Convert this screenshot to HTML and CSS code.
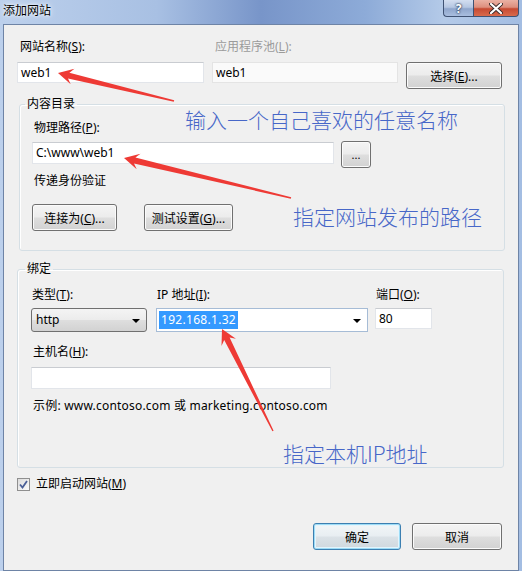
FILE: index.html
```html
<!DOCTYPE html>
<html lang="zh-CN">
<head>
    <meta charset="UTF-8">
    <title>添加网站</title>
    <link rel="stylesheet" href="styles.css">
</head>
<body>
    <div class="window">
        <div class="titlebar">
            <span class="title">添加网站</span>
            <div class="caption-buttons">
                <div class="cap help">?</div>
                <div class="cap close">
                    <svg width="14" height="11" viewBox="0 0 14 11">
                        <path d="M2 1 L12 10 M12 1 L2 10" stroke="#3a2a2a" stroke-width="4" stroke-linecap="round"/>
                        <path d="M2 1 L12 10 M12 1 L2 10" stroke="#fff" stroke-width="2.2" stroke-linecap="round"/>
                    </svg>
                </div>
            </div>
        </div>

        <div class="client">
            <!-- 网站名称 / 应用程序池 -->
            <div class="site-row">
                <div class="col name-col">
                    <div class="label">网站名称(<u>S</u>):</div>
                    <div class="textbox">web1</div>
                </div>
                <div class="col pool-col">
                    <div class="label disabled">应用程序池(<u>L</u>):</div>
                    <div class="textbox readonly">web1</div>
                </div>
                <button class="btn select-btn">选择(<u>E</u>)...</button>
            </div>

            <fieldset class="group content-group">
                <legend>内容目录</legend>
                <div class="label">物理路径(<u>P</u>):</div>
                <div class="path-row">
                    <div class="textbox path-box">C:\www\web1</div>
                    <button class="btn browse-btn">...</button>
                </div>
                <div class="label auth-label">传递身份验证</div>
                <div class="auth-row">
                    <button class="btn connect-btn">连接为(<u>C</u>)...</button>
                    <button class="btn test-btn">测试设置(<u>G</u>)...</button>
                </div>
            </fieldset>

            <fieldset class="group binding-group">
                <legend>绑定</legend>
                <div class="binding-row">
                    <div class="col type-col">
                        <div class="label">类型(<u>T</u>):</div>
                        <div class="dropdown">
                            <span>http</span>
                            <span class="arrow"></span>
                        </div>
                    </div>
                    <div class="col ip-col">
                        <div class="label">IP 地址(<u>I</u>):</div>
                        <div class="combo">
                            <span class="selected">192.168.1.32</span>
                            <span class="arrow"></span>
                        </div>
                    </div>
                    <div class="col port-col">
                        <div class="label">端口(<u>O</u>):</div>
                        <div class="textbox port-box">80</div>
                    </div>
                </div>
                <div class="label host-label">主机名(<u>H</u>):</div>
                <div class="textbox host-box"></div>
                <div class="label example">示例: www.contoso.com 或 marketing.contoso.com</div>
            </fieldset>

            <div class="check-row">
                <span class="checkbox">
                    <svg width="9" height="9" viewBox="0 0 9 9">
                        <path d="M1 4.5 L3.5 7.5 L8 1" fill="none" stroke="#4a5f97" stroke-width="1.8"/>
                    </svg>
                </span>
                <span class="label">立即启动网站(<u>M</u>)</span>
            </div>

            <div class="footer">
                <button class="btn ok-btn">确定</button>
                <button class="btn cancel-btn">取消</button>
            </div>
        </div>

        <!-- 标注 -->
        <svg class="arrows" width="522" height="571" viewBox="0 0 522 571">
            <polygon fill="#ee3a35" points="58,73 74.5,68.7 69.4,72.7 174.2,100.3 173.8,101.7 68,78.5 70.7,84.3"/>
            <polygon fill="#ee3a35" points="124,158 140.5,153.7 135.4,157.6 291.2,197.3 290.8,198.7 134,163.4 136.7,169.3"/>
            <polygon fill="#ee3a35" points="222,329 235.9,338.8 229.6,337.5 273.6,430.7 272.4,431.3 224.2,340.1 221.5,346"/>
        </svg>
        <span class="note note-name">输入一个自己喜欢的任意名称</span>
        <span class="note note-path">指定网站发布的路径</span>
        <span class="note note-ip">指定本机IP地址</span>
    </div>
</body>
</html>
```

FILE: styles.css
```css
body {
    margin: 0;
    font-family: "Noto Sans", "Noto Sans CJK SC", sans-serif;
    font-size: 12px;
    color: #000;
}

.window {
    position: relative;
    width: 522px;
    height: 571px;
    box-sizing: border-box;
    padding: 0 3px 3px 3px;
    background: linear-gradient(90deg, #bcd0ec 0%, #a8c0e3 30%, #7895c9 50%, #8dabd8 70%, #b4cae8 85%, #a3bde2 100%);
}

.titlebar {
    position: relative;
    height: 24px;
}

.title {
    display: inline-block;
    padding-top: 3px;
    line-height: 16px;
    text-shadow: 0 0 6px #fff, 0 0 3px #fff;
}

.caption-buttons {
    position: absolute;
    top: 0;
    right: 0;
    display: flex;
}

.cap {
    height: 17px;
    box-sizing: border-box;
    border: 1px solid #3f5273;
    border-top: none;
    display: flex;
    align-items: center;
    justify-content: center;
}

.help {
    width: 30px;
    border-right: none;
    border-radius: 0 0 0 4px;
    background: linear-gradient(#d3def0 0%, #b6c7e2 45%, #8fa6cc 55%, #a9bedf 100%);
    color: #fff;
    font-weight: bold;
    font-size: 12px;
    text-shadow: 0 0 2px #233350, 0 0 2px #233350;
}

.close {
    width: 46px;
    border-radius: 0 0 4px 0;
    background: linear-gradient(#eab1a4 0%, #dd8f7e 45%, #c64a32 55%, #d86a4c 100%);
}

.client {
    height: 547px;
    box-sizing: border-box;
    border: 1px solid #6e84a6;
    background: #f0f0f0;
    padding: 0 0 0 13px;
}

.label {
    line-height: 16px;
    white-space: nowrap;
}

.label.disabled {
    color: #9b9b9b;
}

u {
    text-decoration: underline;
}

.textbox {
    box-sizing: border-box;
    height: 21px;
    line-height: 19px;
    padding: 0 3px;
    background: #fff;
    border: 1px solid #e2e5ea;
    border-top-color: #c9ccd1;
    white-space: nowrap;
}

.textbox.readonly {
    background: #fafafa;
    border-color: #e4e4e4;
}

.btn {
    box-sizing: border-box;
    height: 27px;
    padding: 0;
    border: 1px solid #707070;
    border-radius: 3px;
    background: linear-gradient(#f4f4f4 0%, #ececec 48%, #dedede 52%, #d2d2d2 100%);
    box-shadow: inset 0 0 0 1px #fbfbfb;
    font-family: inherit;
    font-size: 12px;
    color: #000;
}

/* 第一行 */
.site-row {
    display: flex;
    align-items: flex-start;
    gap: 8px;
    margin-top: 14px;
}

.site-row .col {
    display: flex;
    flex-direction: column;
    gap: 7px;
}

.site-row .label {
    padding-left: 3px;
}

.name-col {
    width: 187px;
}

.pool-col {
    width: 186px;
}

.select-btn {
    width: 96px;
    margin-top: 23px;
}

/* 分组框 */
.group {
    box-sizing: border-box;
    min-width: 0;
    border: 1px solid #d5dfe5;
    border-radius: 3px;
    box-shadow: inset 1px 1px 0 #fff;
}

.group legend {
    padding: 0 2px;
    line-height: 16px;
}

.content-group {
    width: 486px;
    margin: 7px 0 0 2px;
    padding: 8px 12px 19px 12px;
}

.content-group legend {
    margin-left: -7px;
}

.content-group > .label {
    padding-left: 2px;
}

.path-row {
    display: flex;
    align-items: flex-start;
    gap: 7px;
    margin-top: 5px;
}

.path-box {
    width: 302px;
    height: 22px;
    margin-top: 1px;
}

.browse-btn {
    width: 30px;
    font-size: 11px;
}

.auth-label {
    margin-top: 5px;
}

.auth-row {
    display: flex;
    gap: 27px;
    margin-top: 15px;
}

.connect-btn {
    width: 85px;
}

.test-btn {
    width: 89px;
}

.binding-group {
    width: 487px;
    margin: 10px 0 0 0;
    padding: 10px 13px 53px 13px;
}

.binding-group legend {
    margin-left: -6px;
}

.binding-row {
    display: flex;
    align-items: flex-start;
}

.binding-row .col {
    display: flex;
    flex-direction: column;
    gap: 5px;
}

.binding-row .label {
    padding-left: 1px;
}

.type-col {
    width: 116px;
    margin-right: 9px;
}

.ip-col {
    width: 212px;
    margin-right: 7px;
}

.port-col {
    width: 57px;
}

.dropdown {
    position: relative;
    box-sizing: border-box;
    height: 24px;
    line-height: 22px;
    padding-left: 4px;
    border: 1px solid #707070;
    border-radius: 3px;
    background: linear-gradient(#f4f4f4 0%, #ececec 48%, #dedede 52%, #d2d2d2 100%);
}

.combo {
    position: relative;
    box-sizing: border-box;
    height: 24px;
    padding: 2px 0 0 2px;
    background: #fff;
    border: 1px solid #a6bcd6;
}

.selected {
    display: inline-block;
    line-height: 18px;
    padding: 0 2px;
    letter-spacing: 0.3px;
    background: #3399ff;
    color: #fff;
}

.arrow {
    position: absolute;
    top: 10px;
    right: 6px;
    width: 0;
    height: 0;
    border-left: 4px solid transparent;
    border-right: 4px solid transparent;
    border-top: 4px solid #000;
}

.host-label {
    margin-top: 12px;
    padding-left: 2px;
}

.host-box {
    width: 300px;
    height: 22px;
    margin-top: 7px;
}

.example {
    margin-top: 9px;
    padding-left: 2px;
    letter-spacing: 0.2px;
}

/* 复选框 */
.check-row {
    display: flex;
    align-items: center;
    gap: 6px;
    margin-top: 8px;
    height: 16px;
}

.checkbox {
    box-sizing: border-box;
    width: 13px;
    height: 13px;
    border: 1px solid #8f8f8f;
    background: linear-gradient(135deg, #dcdcdc, #fbfbfb);
    display: flex;
    align-items: center;
    justify-content: center;
}

.footer {
    display: flex;
    justify-content: flex-end;
    gap: 11px;
    margin-top: 31px;
    padding-right: 16px;
}

.ok-btn {
    width: 88px;
    border-color: #3c7fb1;
    box-shadow: inset 0 0 0 1px #9ddcf6, inset 0 0 0 2px #e4f4fc;
    background: linear-gradient(#f2f6f8 0%, #e8eef2 48%, #dbe2e7 52%, #cfd8de 100%);
}

.cancel-btn {
    width: 90px;
}

/* 标注 */
.arrows {
    position: absolute;
    top: 0;
    left: 0;
    pointer-events: none;
}

.note {
    position: absolute;
    font-family: "Noto Sans CJK SC", sans-serif;
    font-size: 21px;
    font-weight: 300;
    line-height: 24px;
    color: #4767c8;
    white-space: nowrap;
}

.note-name {
    left: 185px;
    top: 107px;
}

.note-path {
    left: 293px;
    top: 204px;
}

.note-ip {
    left: 283px;
    top: 441px;
}
```
